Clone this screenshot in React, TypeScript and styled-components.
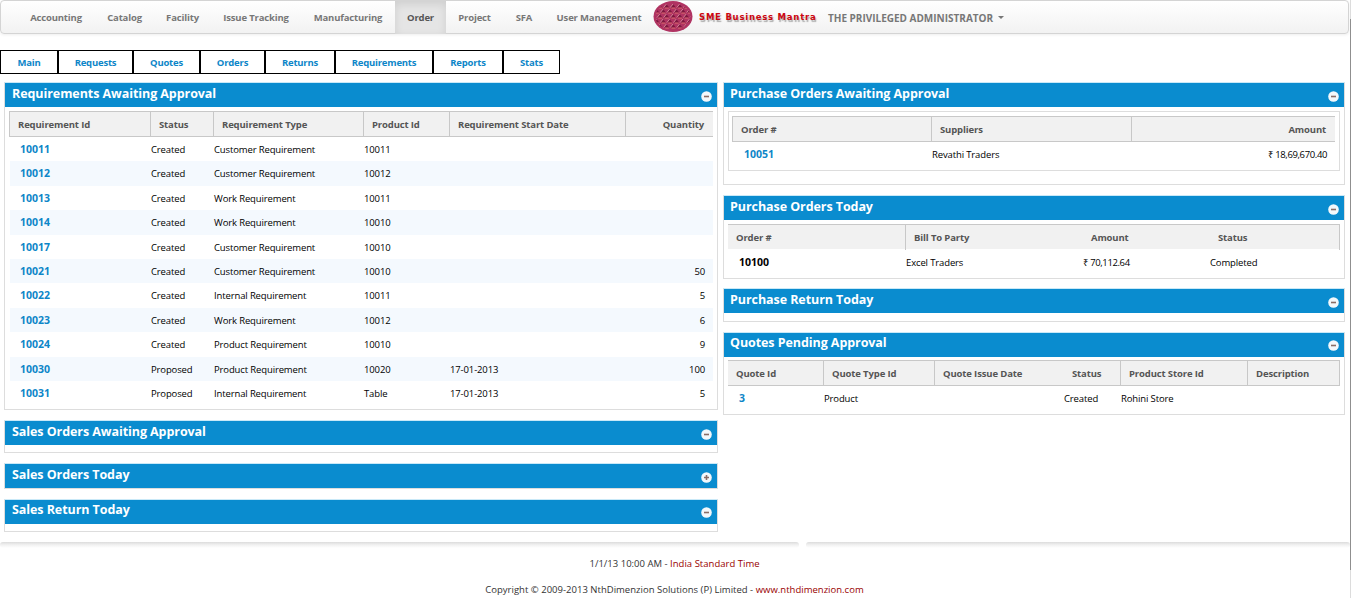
import React from 'react';
import styled, { createGlobalStyle } from 'styled-components';

const GlobalStyle = createGlobalStyle`
  * { box-sizing: border-box; }
  html, body { margin: 0; padding: 0; overflow: hidden; }
  body {
    background: #fff;
    font-family: 'Open Sans', 'Noto Sans', sans-serif;
    font-size: 9.5px;
    letter-spacing: -0.13px;
    color: #000;
  }
  a { text-decoration: none; }
`;

const Page = styled.div`
  position: relative;
  width: 1351px;
  height: 598px;
  overflow: hidden;
`;

const ScrollEdge = styled.div`
  position: absolute;
  top: 0;
  right: 0;
  width: 1px;
  height: 598px;
  background: linear-gradient(#dcdcdc 0 19px, #8f8f8f 19px 570px, #dcdcdc 570px);
`;

const Navbar = styled.nav`
  display: flex;
  width: 1349px;
  height: 34px;
  padding-left: 16px;
  border: 1px solid #d4d4d4;
  border-radius: 4px;
  background: linear-gradient(#ffffff, #f2f2f2);
  box-shadow: 0 1px 3px rgba(0, 0, 0, 0.07);
`;

const NavItem = styled.a<{ $width: number; $active?: boolean }>`
  width: ${(p) => p.$width}px;
  height: 33px;
  line-height: 33px;
  text-align: center;
  white-space: nowrap;
  font-weight: 700;
  letter-spacing: -0.16px;
  color: ${(p) => (p.$active ? '#555' : '#777')};
  background: ${(p) => (p.$active ? '#e5e5e5' : 'transparent')};
  box-shadow: ${(p) => (p.$active ? 'inset 0 3px 8px rgba(0, 0, 0, 0.1)' : 'none')};
`;

const Logo = styled.svg`
  display: block;
  width: 40px;
  height: 33px;
  flex: none;
`;

const Brand = styled.span`
  width: 135px;
  padding-left: 6px;
  white-space: nowrap;
  font: 700 8.5px/33px 'DejaVu Sans', sans-serif;
  letter-spacing: 0.76px;
  color: #cc0610;
  text-shadow: 1px 2px 1px #aaa;
`;

const UserMenu = styled.span`
  display: flex;
  align-items: center;
  gap: 5px;
  height: 33px;
  font-size: 10px;
  font-weight: 700;
  letter-spacing: -0.01px;
  color: #777;
  white-space: nowrap;
`;

const Caret = styled.i`
  border: 3px solid transparent;
  border-top-color: #777;
  border-bottom: 0;
`;

const Tabs = styled.div`
  display: flex;
  margin-top: 16px;
`;

const Tab = styled.a<{ $width: number }>`
  width: ${(p) => p.$width}px;
  height: 24px;
  border: 1px solid #000;
  line-height: 23px;
  text-align: center;
  font-weight: 700;
  letter-spacing: -0.2px;
  color: #0d86c8;
`;

const Columns = styled.main`
  display: flex;
  align-items: flex-start;
  gap: 5px;
  height: 468px;
  padding: 8px 0 0 4px;
`;

const Column = styled.section<{ $width: number }>`
  width: ${(p) => p.$width}px;
`;

const PanelBox = styled.div<{ $height: number; $gap: number }>`
  height: ${(p) => p.$height}px;
  margin-bottom: ${(p) => p.$gap}px;
  border: 1px solid #ddd;
  border-top-color: #c9e9f8;
`;

const PanelHeader = styled.header<{ $indent: number }>`
  display: flex;
  justify-content: space-between;
  height: 24px;
  padding: 0 5px 0 ${(p) => p.$indent}px;
  background: #0a8ccf;
`;

const PanelTitle = styled.h2<{ $raised?: boolean }>`
  margin: 0;
  font-size: 12.5px;
  line-height: ${(p) => (p.$raised ? 19 : 21)}px;
  font-weight: 700;
  letter-spacing: -0.07px;
  color: #fff;
`;

const ToggleIcon = styled.svg<{ $raised?: boolean }>`
  width: 11px;
  height: 11px;
  margin-top: ${(p) => (p.$raised ? 7 : 8)}px;
`;

const PanelBody = styled.div<{ $top: number; $framed?: boolean }>`
  ${(p) =>
    p.$framed
      ? `margin: 4px 4px 0; height: 60px; padding: 4px 4px 0 3px; border: 1px solid #ddd;`
      : `padding: ${p.$top}px 4px 0;`}
`;

const HeadRow = styled.div<{ $cols: string; $left?: boolean; $bottom?: boolean }>`
  display: grid;
  grid-template-columns: ${(p) => p.$cols};
  height: 26px;
  border-top: 1px solid #c8c8c8;
  border-bottom: 1px solid ${(p) => (p.$bottom ? '#c8c8c8' : '#fff')};
  border-left: ${(p) => (p.$left ? '1px solid #c8c8c8' : '0')};
  background: #f1f1f1;
`;

const HeadCell = styled.div<{ $divider?: boolean; $right?: boolean }>`
  padding: 0 8px;
  border-right: ${(p) => (p.$divider ? '1px solid #c8c8c8' : '0')};
  line-height: 25px;
  text-align: ${(p) => (p.$right ? 'right' : 'left')};
  font-weight: 700;
  color: #555;
  white-space: nowrap;
`;

const Row = styled.div<{ $cols: string; $inset?: boolean; $striped?: boolean }>`
  display: grid;
  grid-template-columns: ${(p) => p.$cols};
  height: 24.4px;
  margin-left: ${(p) => (p.$inset ? 1 : 0)}px;
  line-height: 25px;
  background: ${(p) => (p.$striped ? '#f4f9fe' : 'transparent')};
`;

const Cell = styled.div<{ $right?: boolean; $tight?: boolean }>`
  padding-right: ${(p) => (p.$right ? 7 : 0)}px;
  text-align: ${(p) => (p.$right ? 'right' : 'left')};
  letter-spacing: ${(p) => (p.$tight ? '-0.38px' : 'inherit')};
  white-space: nowrap;
`;

const IdCell = styled.div<{ $indent: number; $plain?: boolean }>`
  padding-left: ${(p) => p.$indent}px;
  font-size: 10.5px;
  font-weight: 700;
  letter-spacing: 0;
  color: ${(p) => (p.$plain ? '#000' : '#0d86c8')};
`;

const Dividers = styled.div`
  display: flex;
  gap: 7px;
  height: 6px;
`;

const Divider = styled.div<{ $width: number }>`
  width: ${(p) => p.$width}px;
  background: linear-gradient(#dcdcdc, #f2f2f2 50%, #fff);
  border-radius: 6px;
`;

const Footer = styled.footer`
  padding: 3px 2px 0 0;
  text-align: center;
  letter-spacing: 0.015px;
  color: #333;
`;

const FooterLine = styled.p`
  margin: 0;
  height: 26px;
  line-height: 26px;
`;

const FooterLink = styled.a`
  color: #900;
`;

function Toggle({ collapsed, raised }: { collapsed?: boolean; raised?: boolean }) {
  return (
    <ToggleIcon viewBox="0 0 11 11" $raised={raised}>
      <circle cx="5.5" cy="5.5" r="5.3" fill="#f3f8fb" />
      <path d={collapsed ? 'M3 5.5h5M5.5 3v5' : 'M3 5.5h5'} stroke="#8a6d66" strokeWidth="1.6" />
    </ToggleIcon>
  );
}

type Col = { label: string; width: number; divider?: boolean; right?: boolean; tight?: boolean };

function Grid(props: {
  cols: Col[];
  rows: string[][];
  left?: boolean;
  bottom?: boolean;
  indent?: number;
  plain?: boolean;
}) {
  const { cols, rows, left, bottom = true, indent = 11, plain } = props;
  const template = cols.map((c) => `${c.width}px`).join(' ');
  return (
    <>
      <HeadRow $cols={template} $left={left} $bottom={bottom}>
        {cols.map((c) => (
          <HeadCell key={c.label} $divider={c.divider} $right={c.right}>
            {c.label}
          </HeadCell>
        ))}
      </HeadRow>
      {rows.map((row, r) => (
        <Row key={row[0]} $cols={template} $inset={left} $striped={r % 2 === 1}>
          {row.map((value, i) =>
            i === 0 ? (
              <IdCell key={i} $indent={indent} $plain={plain}>
                {value}
              </IdCell>
            ) : (
              <Cell key={i} $right={cols[i].right} $tight={cols[i].tight}>
                {value}
              </Cell>
            ),
          )}
        </Row>
      ))}
    </>
  );
}

function Panel(props: {
  title: string;
  height: number;
  gap?: number;
  indent: number;
  collapsed?: boolean;
  raised?: boolean;
  children?: React.ReactNode;
}) {
  return (
    <PanelBox $height={props.height} $gap={props.gap ?? 10}>
      <PanelHeader $indent={props.indent}>
        <PanelTitle $raised={props.raised}>{props.title}</PanelTitle>
        <Toggle collapsed={props.collapsed} raised={props.raised} />
      </PanelHeader>
      {props.children}
    </PanelBox>
  );
}

const navItems: [string, number][] = [
  ['Accounting', 78],
  ['Catalog', 59],
  ['Facility', 57],
  ['Issue Tracking', 90],
  ['Manufacturing', 94],
  ['Order', 51],
  ['Project', 57],
  ['SFA', 42],
  ['User Management', 108],
];

const tabs: [string, number][] = [
  ['Main', 58],
  ['Requests', 75],
  ['Quotes', 67],
  ['Orders', 65],
  ['Returns', 70],
  ['Requirements', 98],
  ['Reports', 70],
  ['Stats', 57],
];

const requirementCols: Col[] = [
  { label: 'Requirement Id', width: 141, divider: true },
  { label: 'Status', width: 63, divider: true },
  { label: 'Requirement Type', width: 150, divider: true },
  { label: 'Product Id', width: 86, divider: true },
  { label: 'Requirement Start Date', width: 176, divider: true },
  { label: 'Quantity', width: 86, right: true },
];

const requirements = [
  ['10011', 'Created', 'Customer Requirement', '10011', '', ''],
  ['10012', 'Created', 'Customer Requirement', '10012', '', ''],
  ['10013', 'Created', 'Work Requirement', '10011', '', ''],
  ['10014', 'Created', 'Work Requirement', '10010', '', ''],
  ['10017', 'Created', 'Customer Requirement', '10010', '', ''],
  ['10021', 'Created', 'Customer Requirement', '10010', '', '50'],
  ['10022', 'Created', 'Internal Requirement', '10011', '', '5'],
  ['10023', 'Created', 'Work Requirement', '10012', '', '6'],
  ['10024', 'Created', 'Product Requirement', '10010', '', '9'],
  ['10030', 'Proposed', 'Product Requirement', '10020', '17-01-2013', '100'],
  ['10031', 'Proposed', 'Internal Requirement', 'Table', '17-01-2013', '5'],
];

const awaitingCols: Col[] = [
  { label: 'Order #', width: 199, divider: true },
  { label: 'Suppliers', width: 200, divider: true },
  { label: 'Amount', width: 202, right: true, tight: true },
];

const todayCols: Col[] = [
  { label: 'Order #', width: 178, divider: true },
  { label: 'Bill To Party', width: 177 },
  { label: 'Amount', width: 127, tight: true },
  { label: 'Status', width: 130, divider: true },
];

const quoteCols: Col[] = [
  { label: 'Quote Id', width: 96, divider: true },
  { label: 'Quote Type Id', width: 111, divider: true },
  { label: 'Quote Issue Date', width: 129 },
  { label: 'Status', width: 57, divider: true },
  { label: 'Product Store Id', width: 127, divider: true },
  { label: 'Description', width: 92, divider: true },
];

const logoRows = [5, 10, 15, 20, 25];
const logoMarks = [0, 1, 2, 3, 4, 5, 6];

function BrandMark() {
  return (
    <Logo viewBox="0 0 40 33">
      <defs>
        <clipPath id="mark">
          <ellipse cx="20" cy="15.5" rx="17.5" ry="13.5" />
        </clipPath>
      </defs>
      <ellipse cx="20" cy="15.5" rx="19.5" ry="15.5" fill="#b03362" />
      <g clipPath="url(#mark)">
        {logoRows.map((y, r) =>
          logoMarks.map((i) => {
            const x = i * 6.6 + (r % 2 ? -3.1 : 0.2);
            return (
              <g key={`${r}-${i}`}>
                <path d={`M${x - 2.8} ${y + 1.6}L${x} ${y - 2}L${x + 2.8} ${y + 1.6}Z`} fill="#7d1840" />
                <path d={`M${x - 2.8} ${y + 1.6}L${x} ${y - 2}`} stroke="#e39aa6" strokeWidth="0.8" />
                <path d={`M${x - 1.5} ${y + 2.1}H${x + 2.4}`} stroke="#e2766f" strokeWidth="0.8" />
              </g>
            );
          }),
        )}
      </g>
    </Logo>
  );
}

export default function App() {
  return (
    <Page>
      <GlobalStyle />
      <Navbar>
        {navItems.map(([label, width]) => (
          <NavItem key={label} $width={width} $active={label === 'Order'}>
            {label}
          </NavItem>
        ))}
        <BrandMark />
        <Brand>SME Business Mantra</Brand>
        <UserMenu>
          THE PRIVILEGED ADMINISTRATOR
          <Caret />
        </UserMenu>
      </Navbar>
      <Tabs>
        {tabs.map(([label, width]) => (
          <Tab key={label} $width={width}>
            {label}
          </Tab>
        ))}
      </Tabs>
      <Columns>
        <Column $width={714}>
          <Panel title="Requirements Awaiting Approval" height={328} indent={7}>
            <PanelBody $top={4}>
              <Grid cols={requirementCols} rows={requirements} left indent={10} />
            </PanelBody>
          </Panel>
          <Panel title="Sales Orders Awaiting Approval" height={33} indent={7} />
          <Panel title="Sales Orders Today" height={26} indent={7} collapsed />
          <Panel title="Sales Return Today" height={33} indent={7} raised />
        </Column>
        <Column $width={622}>
          <Panel title="Purchase Orders Awaiting Approval" height={103} indent={6}>
            <PanelBody $top={4} $framed>
              <Grid cols={awaitingCols} rows={[['10051', 'Revathi Traders', '₹ 18,69,670.40']]} left />
            </PanelBody>
          </Panel>
          <Panel title="Purchase Orders Today" height={84} gap={9} indent={6}>
            <PanelBody $top={4}>
              <Grid
                cols={todayCols}
                rows={[['10100', 'Excel Traders', '₹ 70,112.64', 'Completed']]}
                bottom={false}
                plain
              />
            </PanelBody>
          </Panel>
          <Panel title="Purchase Return Today" height={34} indent={6} />
          <Panel title="Quotes Pending Approval" height={83} indent={6} raised>
            <PanelBody $top={3}>
              <Grid cols={quoteCols} rows={[['3', 'Product', '', 'Created', 'Rohini Store', '']]} />
            </PanelBody>
          </Panel>
        </Column>
      </Columns>
      <Dividers>
        <Divider $width={799} />
        <Divider $width={544} />
      </Dividers>
      <Footer>
        <FooterLine>
          1/1/13 10:00 AM - <FooterLink>India Standard Time</FooterLink>
        </FooterLine>
        <FooterLine>
          Copyright © 2009-2013 NthDimenzion Solutions (P) Limited -{' '}
          <FooterLink>www.nthdimenzion.com</FooterLink>
        </FooterLine>
      </Footer>
      <ScrollEdge />
    </Page>
  );
}
